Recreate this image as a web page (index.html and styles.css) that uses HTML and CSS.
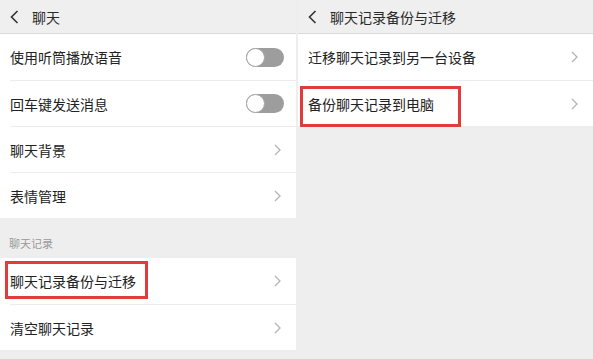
FILE: index.html
```html
<!DOCTYPE html>
<html lang="zh">
<head>
<meta charset="utf-8">
<link rel="stylesheet" href="styles.css">
</head>
<body>
<div class="screens">
  <section class="panel">
    <header class="bar">
      <svg class="back" width="9" height="14" viewBox="0 0 9 14"><polyline points="7.5,1 1.5,7 7.5,13" fill="none" stroke="#333" stroke-width="1.6"/></svg>
      <span class="title">聊天</span>
    </header>
    <div class="group">
      <div class="row"><span class="label">使用听筒播放语音</span><span class="switch"><span class="knob"></span></span></div>
      <div class="row"><span class="label">回车键发送消息</span><span class="switch"><span class="knob"></span></span></div>
      <div class="row"><span class="label">聊天背景</span><svg class="chev" width="7" height="12" viewBox="0 0 7 12"><polyline points="1,1 6,6 1,11" fill="none" stroke="#b4b4b4" stroke-width="1.3"/></svg></div>
      <div class="row"><span class="label">表情管理</span><svg class="chev" width="7" height="12" viewBox="0 0 7 12"><polyline points="1,1 6,6 1,11" fill="none" stroke="#b4b4b4" stroke-width="1.3"/></svg></div>
    </div>
    <div class="section">聊天记录</div>
    <div class="group">
      <div class="row"><span class="label">聊天记录备份与迁移</span><svg class="chev" width="7" height="12" viewBox="0 0 7 12"><polyline points="1,1 6,6 1,11" fill="none" stroke="#b4b4b4" stroke-width="1.3"/></svg><span class="mark mark-left"></span></div>
      <div class="row"><span class="label">清空聊天记录</span><svg class="chev" width="7" height="12" viewBox="0 0 7 12"><polyline points="1,1 6,6 1,11" fill="none" stroke="#b4b4b4" stroke-width="1.3"/></svg></div>
    </div>
  </section>
  <section class="panel">
    <header class="bar">
      <svg class="back" width="9" height="14" viewBox="0 0 9 14"><polyline points="7.5,1 1.5,7 7.5,13" fill="none" stroke="#333" stroke-width="1.6"/></svg>
      <span class="title">聊天记录备份与迁移</span>
    </header>
    <div class="group">
      <div class="row"><span class="label">迁移聊天记录到另一台设备</span><svg class="chev" width="7" height="12" viewBox="0 0 7 12"><polyline points="1,1 6,6 1,11" fill="none" stroke="#b4b4b4" stroke-width="1.3"/></svg></div>
      <div class="row"><span class="label">备份聊天记录到电脑</span><svg class="chev" width="7" height="12" viewBox="0 0 7 12"><polyline points="1,1 6,6 1,11" fill="none" stroke="#b4b4b4" stroke-width="1.3"/></svg><span class="mark mark-right"></span></div>
    </div>
  </section>
</div>
</body>
</html>
```
FILE: styles.css
```css
* { box-sizing: border-box; }
html, body {
  margin: 0;
  padding: 0;
  background: #eeeeee;
  font-family: "Noto Sans CJK SC", "Noto Sans", sans-serif;
  color: #222;
}
.screens {
  display: grid;
  grid-template-columns: 296px 1fr;
  column-gap: 2px;
  height: 359px;
  overflow: hidden;
}
.panel {
  background: #eeeeee;
  display: flex;
  flex-direction: column;
}
.bar {
  height: 34px;
  border-bottom: 1px solid #dadada;
  background: #efefef;
  display: flex;
  align-items: center;
  padding-left: 10px;
  gap: 13px;
}
.back { display: block; flex: none; }
.title {
  font-size: 14px;
  color: #2a2a2a;
  line-height: 1;
}
.group {
  background: #fff;
  padding-left: 10px;
}
.row {
  position: relative;
  height: 46px;
  display: flex;
  align-items: center;
  justify-content: space-between;
  padding-right: 12px;
  border-top: 1px solid #ececec;
}
.row:first-child {
  border-top: none;
}
.label {
  font-size: 14px;
  line-height: 1;
  color: #222;
}
.switch {
  width: 38px;
  height: 19px;
  border-radius: 10px;
  background: #9d9d9d;
  display: flex;
  align-items: center;
}
.knob {
  width: 19px;
  height: 19px;
  border-radius: 50%;
  background: #fff;
  border: 1px solid #a8a8a8;
}
.chev { display: block; margin-right: 3px; }
.section {
  height: 40px;
  padding: 20px 0 0 9px;
  font-size: 11px;
  line-height: 1;
  color: #9a9a9a;
}
.mark {
  position: absolute;
  border: 3px solid #e23b3b;
  pointer-events: none;
}
.mark-left {
  left: -5px;
  top: 3px;
  width: 143px;
  height: 38px;
}
.mark-right {
  left: -8px;
  top: 5px;
  width: 161px;
  height: 41px;
}
```
